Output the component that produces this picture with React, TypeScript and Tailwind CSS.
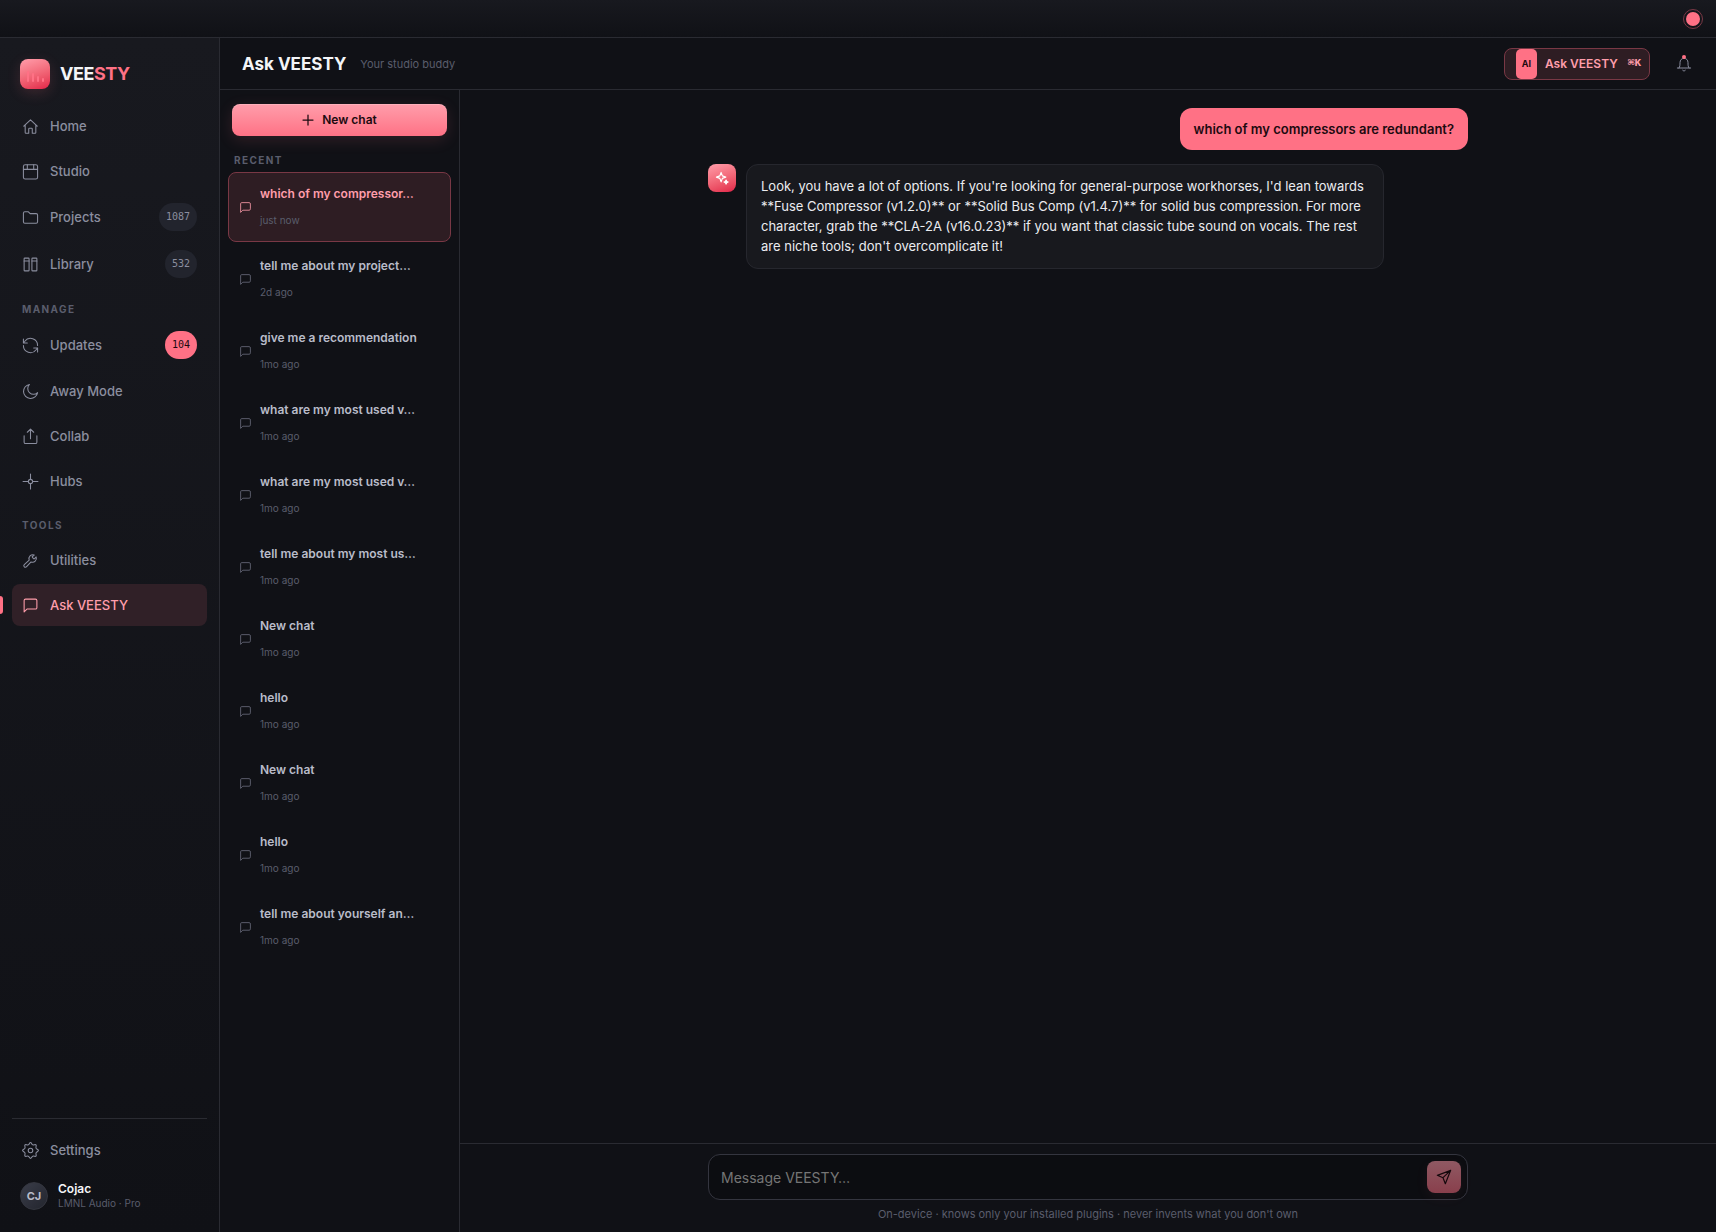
import clsx from 'clsx';
import type { ReactNode } from 'react';

interface IconProps {
    className?: string;
    strokeWidth?: number;
    children?: ReactNode;
}

interface NavEntry {
    label: string;
    icon: ReactNode;
    count?: number;
    highlight?: boolean;
    active?: boolean;
}

interface Chat {
    title: string;
    time: string;
}

function Icon({ className, strokeWidth = 1.5, children }: IconProps) {
    return (
        <svg
            viewBox="0 0 24 24"
            fill="none"
            stroke="currentColor"
            strokeWidth={strokeWidth}
            strokeLinecap="round"
            strokeLinejoin="round"
            aria-hidden="true"
            className={clsx('shrink-0', className)}
        >
            {children}
        </svg>
    );
}

const chatPath = (
    <path d="M21 15a2 2 0 0 1-2 2H7l-4 4V5a2 2 0 0 1 2-2h14a2 2 0 0 1 2 2z" />
);

const mainNav: NavEntry[] = [
    {
        label: 'Home',
        icon: (
            <path d="M2.5 11.5 12 2.5l9.5 9M4.500 10v10.500a1 1 0 0 0 1 1H9.500V15.500a1 1 0 0 1 1-1h3a1 1 0 0 1 1 1v6h4a1 1 0 0 0 1-1V10" />
        ),
    },
    {
        label: 'Studio',
        icon: (
            <>
                <rect x="2" y="2.5" width="20" height="20" rx="2.5" />
                <path d="M2 9h20M7.500 2.500V9M16.500 2.500V9" />
            </>
        ),
    },
    {
        label: 'Projects',
        count: 1087,
        icon: (
            <path d="M2 6a2 2 0 0 1 2-2h5l2.500 2.500H20a2 2 0 0 1 2 2V18a2 2 0 0 1-2 2H4a2 2 0 0 1-2-2z" />
        ),
    },
    {
        label: 'Library',
        count: 532,
        icon: (
            <>
                <rect x="3" y="3" width="7" height="18" rx="1" />
                <rect x="14" y="3" width="7" height="18" rx="1" />
                <path d="M3 7h7M14 7h7" />
            </>
        ),
    },
];

const manageNav: NavEntry[] = [
    {
        label: 'Updates',
        count: 104,
        highlight: true,
        icon: (
            <>
                <path d="M22 12A10 10 0 0 0 4 6L2 8.500M2 3v5.500h5.500" />
                <path d="M2 12a10 10 0 0 0 18 6l2-2.500M22 21v-5.500h-5.500" />
            </>
        ),
    },
    {
        label: 'Away Mode',
        icon: <path d="M22 13.500A10 10 0 1 1 10.500 2a8 8 0 0 0 11.500 11.500z" />,
    },
    {
        label: 'Collab',
        icon: (
            <path d="M12 15V1.500M7.500 6 12 1.500 16.500 6M3 11v9a2 2 0 0 0 2 2h14a2 2 0 0 0 2-2v-9" />
        ),
    },
    {
        label: 'Hubs',
        icon: (
            <>
                <circle cx="12" cy="12" r="3" />
                <path d="M12 1.500V9M12 15v7.500M1.500 12H9M15 12h7.500" />
            </>
        ),
    },
];

const toolsNav: NavEntry[] = [
    {
        label: 'Utilities',
        icon: (
            <path d="M14.700 6.300a1 1 0 0 0 0 1.400l1.600 1.600a1 1 0 0 0 1.400 0l2.300-2.300a5.500 5.500 0 0 1-7.200 7l-6.300 6.800a2.100 2.100 0 0 1-3.300-3.100l7-6.200a5.500 5.500 0 0 1 7-7.200z" />
        ),
    },
    { label: 'Ask VEESTY', icon: chatPath, active: true },
];

const chats: Chat[] = [
    { title: 'which of my compressor…', time: 'just now' },
    { title: 'tell me about my project…', time: '2d ago' },
    { title: 'give me a recommendation', time: '1mo ago' },
    { title: 'what are my most used v…', time: '1mo ago' },
    { title: 'what are my most used v…', time: '1mo ago' },
    { title: 'tell me about my most us…', time: '1mo ago' },
    { title: 'New chat', time: '1mo ago' },
    { title: 'hello', time: '1mo ago' },
    { title: 'New chat', time: '1mo ago' },
    { title: 'hello', time: '1mo ago' },
    { title: 'tell me about yourself an…', time: '1mo ago' },
];

function NavItem({ item }: { item: NavEntry }) {
    return (
        <a
            href="#"
            aria-current={item.active ? 'page' : undefined}
            className={clsx(
                'relative flex items-center gap-[11px] rounded-lg px-2.5 text-[13px] leading-5 font-medium',
                item.count ? 'h-11' : 'h-[42px]',
                item.active ? 'bg-[#302027] text-[#ff9dab]' : 'text-[#8b8e9f]',
            )}
        >
            {item.active && (
                <span className="absolute top-3 -left-3 h-[18px] w-[3px] rounded-r-sm bg-[#ff7185]" />
            )}
            <Icon className="size-[17px]">{item.icon}</Icon>
            <span>{item.label}</span>
            {item.count && (
                <span
                    className={clsx(
                        'ml-auto flex h-7 items-center rounded-full px-[7px] font-["DejaVu_Sans_Mono",monospace] text-[10px]',
                        item.highlight
                            ? 'bg-[#ff7185] text-[#1c0a10]'
                            : 'bg-[#22242d] text-[#8b8e9f]',
                    )}
                >
                    {item.count}
                </span>
            )}
        </a>
    );
}

function NavHeading({ children }: { children: ReactNode }) {
    return (
        <h2 className="px-2.5 pt-3.5 pb-1 text-[10px] leading-[13px] font-bold tracking-[0.14em] text-[#5a5d6c]">
            {children}
        </h2>
    );
}

function Sidebar() {
    return (
        <aside className="flex w-[220px] shrink-0 flex-col border-r border-[#2a2b32] bg-linear-to-b from-[#18191f] to-[#101116] px-3 pt-5 pb-[22px]">
            <div className="mb-[17px] flex items-center gap-2.5 px-2">
                <div className="flex size-[30px] items-end justify-center gap-[3px] rounded-lg bg-linear-160 from-[#ff9dab] to-[#e11d48] pb-[7px] shadow-[0_4px_14px_rgba(255,113,133,0.16)]">
                    <span className="h-[11px] w-[2px] rounded-sm bg-[#ff7185]" />
                    <span className="h-[9px] w-[2px] rounded-sm bg-[#ff7185]" />
                    <span className="h-[6px] w-[2px] rounded-sm bg-[#ff7185]" />
                    <span className="h-[4px] w-[2px] rounded-sm bg-[#ff7185]" />
                </div>
                <span className="text-lg leading-8 font-bold tracking-tight text-[#f4f5f8]">
                    VEE<span className="text-[#ff7185]">STY</span>
                </span>
            </div>

            <nav className="-mt-0.5 flex flex-col gap-[3px]">
                {mainNav.map((item) => (
                    <NavItem key={item.label} item={item} />
                ))}
                <NavHeading>MANAGE</NavHeading>
                {manageNav.map((item) => (
                    <NavItem key={item.label} item={item} />
                ))}
                <NavHeading>TOOLS</NavHeading>
                {toolsNav.map((item) => (
                    <NavItem key={item.label} item={item} />
                ))}
            </nav>

            {/* Account */}
            <div className="mt-auto border-t border-[#2a2b32] pt-2.5">
                <NavItem
                    item={{
                        label: 'Settings',
                        icon: (
                            <>
                                <circle cx="12" cy="12" r="3.2" />
                                <path d="M12 .8c1.500 0 1.700 2.600 3.200 3.200s3.600-1 4.600 0-.6 3.100 0 4.600 3.400 1.900 3.400 3.400-2.800 1.900-3.400 3.400 1 3.600 0 4.600-3.100-.6-4.600 0-1.700 3.200-3.200 3.200-1.700-2.600-3.200-3.200-3.600 1-4.600 0 .6-3.100 0-4.600S.8 13.500.8 12s2.800-1.900 3.400-3.400-1-3.600 0-4.600 3.100.6 4.600 0S10.500.8 12 .8z" />
                            </>
                        ),
                    }}
                />
                <div className="mt-[11px] flex items-center gap-2.5 px-2">
                    <div className="flex size-7 items-center justify-center rounded-full border border-[#34363f] bg-linear-135 from-[#3a3d49] to-[#23252e] text-[11px] font-bold text-[#b9bcc9]">
                        CJ
                    </div>
                    <div>
                        <div className="text-xs leading-[14px] font-semibold text-[#f4f5f8]">
                            Cojac
                        </div>
                        <div className="text-[10px] leading-[14px] text-[#5a5d6c]">
                            LMNL Audio · Pro
                        </div>
                    </div>
                </div>
            </div>
        </aside>
    );
}

function ChatList() {
    return (
        <section className="flex w-60 shrink-0 flex-col border-r border-[#2a2b32] px-2 pt-3.5">
            <button
                type="button"
                className="mx-1 flex h-8 items-center justify-center gap-2 rounded-lg bg-linear-to-b from-[#ff9dab] to-[#ff7185] text-xs font-semibold text-[#1c0a10] shadow-[inset_0_1px_0_rgba(255,255,255,0.2),0_4px_16px_rgba(255,113,133,0.14)]"
            >
                <Icon className="size-3" strokeWidth={2.5}>
                    <path d="M12 2v20M2 12h20" />
                </Icon>
                New chat
            </button>
            <h2 className="mt-4 mb-[3px] px-1.5 text-[10px] leading-[17px] font-bold tracking-[0.14em] text-[#5a5d6c]">
                RECENT
            </h2>
            <div className="flex flex-col gap-0.5">
                {chats.map((chat, index) => (
                    <button
                        key={index}
                        type="button"
                        className={clsx(
                            'flex h-[70px] items-center gap-2 rounded-lg border px-2.5 text-left',
                            index === 0
                                ? 'border-[#793845] bg-[#2e1d23]'
                                : 'border-transparent',
                        )}
                    >
                        <Icon
                            className={clsx(
                                'size-[13px]',
                                index === 0
                                    ? 'text-[#ff9dab]'
                                    : 'text-[#6b6e7e]',
                            )}
                        >
                            {chatPath}
                        </Icon>
                        <span className="flex min-w-0 flex-col gap-2.5">
                            <span
                                className={clsx(
                                    'text-xs font-semibold',
                                    index === 0
                                        ? 'text-[#ff9dab]'
                                        : 'text-[#b9bcc9]',
                                )}
                            >
                                {chat.title}
                            </span>
                            <span className="text-[10px] leading-4 text-[#5a5d6c]">
                                {chat.time}
                            </span>
                        </span>
                    </button>
                ))}
            </div>
        </section>
    );
}

function Header() {
    return (
        <header className="flex h-[52px] shrink-0 items-center border-b border-[#2a2b32] pr-6 pl-[22px]">
            <h1 className="text-[17px] leading-6 font-bold text-[#f4f5f8]">
                Ask VEESTY
            </h1>
            <span className="ml-3.5 text-[11px] leading-5 text-[#5a5d6c]">
                Your studio buddy
            </span>
            <button
                type="button"
                className="ml-auto flex h-8 items-center rounded-lg border border-[#793845] bg-[#2e1d23] pr-2 pl-[11px] text-xs font-semibold text-[#ff9dab]"
            >
                <span className="flex h-[30px] w-[21px] items-center justify-center rounded-[5px] bg-[#ff7185] text-[9px] font-bold text-[#1c0a10]">
                    AI
                </span>
                <span className="ml-2">Ask VEESTY</span>
                <span className="ml-2.5 font-['Liberation_Mono','DejaVu_Sans_Mono',monospace] text-[11px]">
                    ⌘K
                </span>
            </button>
            <button
                type="button"
                aria-label="Notifications"
                className="relative ml-[26px] text-[#8b8e9f]"
            >
                <Icon className="size-4">
                    <path d="M2 18h20M4.500 18c1.500-2 1.500-5 1.500-8 0-4 2.500-6.500 6-6.500s6 2.500 6 6.500c0 3 0 6 1.500 8M10 21.500c1 1.300 3 1.300 4 0" />
                </Icon>
                <span className="absolute -top-px left-1/2 size-1 -translate-x-1/2 rounded-full bg-[#ff7185]" />
            </button>
        </header>
    );
}

function Conversation() {
    return (
        <main className="flex min-w-0 flex-1 flex-col">
            <div className="flex-1 px-6 pt-[18px]">
                <div className="mx-auto flex max-w-[760px] flex-col gap-3.5">
                    <p className="self-end rounded-xl bg-[#ff7185] px-3.5 py-[11px] text-[13px] leading-5 font-semibold text-[#1c0a10]">
                        which of my compressors are redundant?
                    </p>
                    <div className="flex items-start gap-2.5">
                        <div className="flex size-7 shrink-0 items-center justify-center rounded-lg bg-linear-160 from-[#ff9dab] to-[#e11d48] text-white">
                            <Icon className="size-[14px]" strokeWidth={2}>
                                <path d="M10.500 2.500 12.700 8.300 18.500 10.500 12.700 12.700 10.500 18.500 8.300 12.700 2.500 10.500 8.300 8.300z" />
                                <path
                                    fill="currentColor"
                                    d="m19 15.500 1.100 2.400 2.400 1.100-2.400 1.100-1.100 2.400-1.100-2.400-2.400-1.100 2.400-1.100z"
                                />
                            </Icon>
                        </div>
                        <p className="max-w-[84%] rounded-xl border border-[#26272e] bg-[#18191e] px-3.5 pt-[11px] pb-3 text-[13px] leading-5 text-[#ebecf0]">
                            Look, you have a lot of options. If you're looking
                            for general-purpose workhorses, I'd lean towards
                            **Fuse Compressor (v1.2.0)** or **Solid Bus Comp
                            (v1.4.7)** for solid bus compression. For more
                            character, grab the **CLA-2A (v16.0.23)** if you
                            want that classic tube sound on vocals. The rest are
                            niche tools; don't overcomplicate it!
                        </p>
                    </div>
                </div>
            </div>

            {/* Composer */}
            <footer className="border-t border-[#2a2b32] px-6 pt-2.5 pb-2.5">
                <form
                    className="mx-auto flex h-[46px] max-w-[760px] items-center rounded-xl border border-[#34353f] bg-[#0c0d11] pr-1.5 pl-3"
                    onSubmit={(e) => e.preventDefault()}
                >
                    <input
                        type="text"
                        aria-label="Message VEESTY"
                        placeholder="Message VEESTY…"
                        className="h-full min-w-0 flex-1 bg-transparent text-sm text-[#f4f5f8] outline-none placeholder:text-[#757575]"
                    />
                    <button
                        type="submit"
                        aria-label="Send"
                        className="flex h-8 w-[34px] items-center justify-center rounded-lg bg-linear-to-b from-[#8f5963] to-[#893f4c] text-[#14080c] shadow-[0_4px_14px_rgba(255,113,133,0.06)]"
                    >
                        <Icon className="size-4" strokeWidth={1.75}>
                            <path d="M22 2 2 9.500l8.500 3.500L14 22zM22 2 10.500 13" />
                        </Icon>
                    </button>
                </form>
                <p className="mt-1.5 text-center text-[11px] leading-4 text-[#5a5d6c]">
                    On-device · knows only your installed plugins · never
                    invents what you don't own
                </p>
            </footer>
        </main>
    );
}

export default function App() {
    return (
        <div className="flex min-h-screen flex-col bg-[#101116] font-[Inter,sans-serif] antialiased">
            <div className="flex h-[38px] shrink-0 items-center justify-end border-b border-[#2a2b32] bg-linear-to-b from-[#18191f] to-[#101116] pr-[13px]">
                <button
                    type="button"
                    aria-label="Record"
                    className="flex size-5 items-center justify-center rounded-full border border-[#793845]"
                >
                    <span className="size-3.5 rounded-full bg-[#ff7185]" />
                </button>
            </div>
            <div className="flex flex-1">
                <Sidebar />
                <div className="flex min-w-0 flex-1 flex-col">
                    <Header />
                    <div className="flex flex-1">
                        <ChatList />
                        <Conversation />
                    </div>
                </div>
            </div>
        </div>
    );
}
